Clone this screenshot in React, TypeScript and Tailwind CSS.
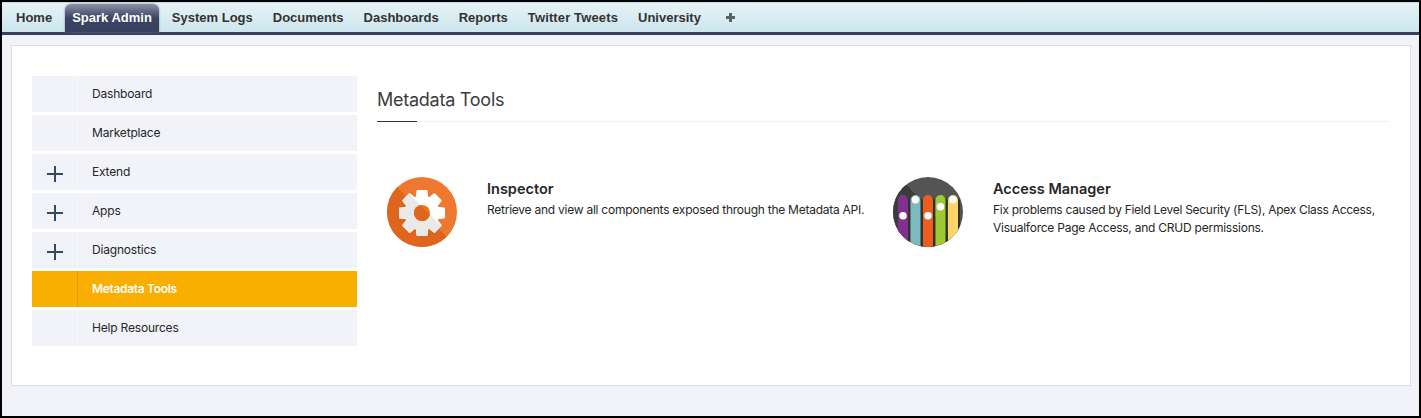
const TABS = ['Home', 'Spark Admin', 'System Logs', 'Documents', 'Dashboards', 'Reports', 'Twitter Tweets', 'University'];

const MENU = [
  { label: 'Dashboard' },
  { label: 'Marketplace' },
  { label: 'Extend', expandable: true },
  { label: 'Apps', expandable: true },
  { label: 'Diagnostics', expandable: true },
  { label: 'Metadata Tools', active: true },
  { label: 'Help Resources' },
];

function TabBar() {
  return (
    <nav className="flex h-[33px] items-end border-t border-b-[3px] border-t-[#c3dce6] border-b-[#38405f] bg-gradient-to-b from-[#e6f2f6] to-[#cce6ee] pl-1 font-['Liberation_Sans',Arial,sans-serif] text-[13px] font-bold text-[#333]">
      {TABS.map((t) =>
        t === 'Spark Admin' ? (
          <a key={t} className="mx-[3px] h-7 rounded-t-[6px] bg-gradient-to-b from-[#8d92a7] via-[#3c4463] via-50% to-[#38405f] px-[7px] leading-[27px] text-white shadow-[0_0_2px_#6f7890]">
            {t}
          </a>
        ) : (
          <a key={t} className={`h-7 px-[10px] leading-[27px] ${t === 'Twitter Tweets' ? 'tracking-[0.13px]' : ''}`}>
            {t}
          </a>
        ),
      )}
      <svg className="mb-[9px] ml-[14px]" width="11" height="11" viewBox="0 0 11 11" fill="#5c5f66">
        <path d="M4 1h3v3h3v3H7v3H4V7H1V4h3z" />
      </svg>
    </nav>
  );
}

function Gear() {
  return (
    <svg className="shrink-0" width="70" height="70" viewBox="0 0 70 70">
      <defs>
        <clipPath id="gearDisc"><circle cx="35" cy="35" r="35" /></clipPath>
        <g id="gearShape">
          <circle cx="35" cy="36" r="17.500" />
          {[0, 45, 90, 135].map((a) => (
            <path key={a} d="M30.500 13h9q1 0 1 1l.5 4v36l-.5 4q0 1-1 1h-9q-1 0-1-1l-.5-4V18l.5-4q0-1 1-1z" transform={`rotate(${a} 35 36)`} />
          ))}
        </g>
        <clipPath id="gearLower"><path d="M0 -5L75 70H0z" /></clipPath>
      </defs>
      <g clipPath="url(#gearDisc)">
        <path d="M0 0h70v70H0z" fill="#ee7830" />
        <path d="M0 0l70 70H0z" fill="#df651f" />
      </g>
      <use href="#gearShape" fill="#fff" />
      <use href="#gearShape" fill="#e9e9e7" clipPath="url(#gearLower)" />
      <circle cx="35" cy="36" r="8" fill="#ea7229" />
      <circle cx="35" cy="36" r="8" fill="#df651f" clipPath="url(#gearLower)" />
    </svg>
  );
}

const BARS = [
  { x: 5, color: '#82308f', knob: 38.7 },
  { x: 17.5, color: '#7bbabd', knob: 22.7 },
  { x: 30, color: '#ee5d20', knob: 38.7 },
  { x: 42.5, color: '#9dca32', knob: 29.7 },
  { x: 55, color: '#ffd467', knob: 22.7 },
];

function Sliders() {
  return (
    <svg className="shrink-0" width="70" height="70" viewBox="0 0 70 70">
      <defs><clipPath id="sliderDisc"><circle cx="35" cy="35" r="35" /></clipPath></defs>
      <g clipPath="url(#sliderDisc)">
        <path d="M0 0h70v70H0z" fill="#535554" />
        <path d="M0 -7l70 77H0z" fill="#3b3d3c" />
        {BARS.map((b) => (
          <g key={b.x}>
            <path d={`M${b.x + 8} 19l4 4v47h-4z`} fill="#303231" />
            <rect x={b.x} y="18" width="10" height="60" rx="5" fill={b.color} />
            <circle cx={b.x + 5} cy={b.knob} r="3.8" fill="#fff" />
          </g>
        ))}
      </g>
    </svg>
  );
}

function SideMenu() {
  return (
    <ul className="flex w-[325px] shrink-0 flex-col gap-[3px] text-[12px] text-[#262626]">
      {MENU.map((m) => (
        <li key={m.label} className={`flex h-9 ${m.active ? 'bg-[#f9ae02] font-semibold tracking-[-0.32px] text-white' : 'bg-[#f2f3f8] tracking-[-0.19px]'}`}>
          <span className={`flex w-[46px] justify-center border-r pt-3 ${m.active ? 'border-[#d99a0b]' : 'border-[#f7f8fb]'}`}>
            {m.expandable && (
              <svg className="ml-px" width="16" height="16" viewBox="0 0 16 16" fill="#34495e">
                <path d="M7 0h2v7h7v2H9v7H7V9H0V7h7z" />
              </svg>
            )}
          </span>
          <span className="pl-[14px] leading-[35px]">{m.label}</span>
        </li>
      ))}
    </ul>
  );
}

export default function App() {
  return (
    <div className="h-[418px] w-[1421px] border-2 border-black bg-[#f2f3f8] font-[Inter,sans-serif]">
      <TabBar />
      <main className="mx-[9px] mt-[10px] mr-2 flex h-[341px] w-[1400px] border border-[#dcdddf] bg-white pt-[30px] pr-5 pl-5">
        <SideMenu />
        <section className="ml-5 flex-1">
          <header className="h-[46px] border-b border-[#f1f1f2]">
            <h1 className="h-[45px] pt-[10px] text-[18px] leading-7 tracking-[-0.25px] text-[#3c3c3c]">Metadata Tools</h1>
            <div className="h-px w-10 bg-[#333]" />
          </header>
          <div className="mt-[55px] flex">
            <article className="flex w-[506px] pl-[10px]">
              <Gear />
              <div className="pl-[30px] whitespace-nowrap text-[#262626]">
                <h2 className="pt-[2px] text-[14.5px] leading-5 font-semibold">Inspector</h2>
                <p className="pt-[2px] text-[12px] leading-[18px] tracking-[-0.25px]">Retrieve and view all components exposed through the Metadata API.</p>
              </div>
            </article>
            <article className="flex pl-[10px]">
              <Sliders />
              <div className="pl-[30px] whitespace-nowrap text-[#262626]">
                <h2 className="pt-[2px] text-[14.5px] leading-5 font-semibold">Access Manager</h2>
                <p className="pt-[2px] text-[12px] leading-[18px] tracking-[-0.29px]">
                  Fix problems caused by Field Level Security (FLS), Apex Class Access,
                  <br />
                  <span className="tracking-[-0.24px]">Visualforce Page Access, and CRUD permissions.</span>
                </p>
              </div>
            </article>
          </div>
        </section>
      </main>
    </div>
  );
}
